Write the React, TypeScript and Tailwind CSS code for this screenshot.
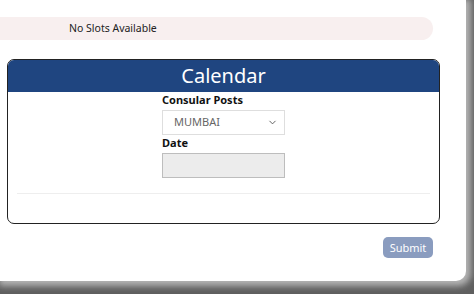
import { ChevronDown } from "lucide-react";

export default function App() {
  return (
    <div className="w-[474px] h-[294px] bg-[#5f5f5f] overflow-hidden" style={{ fontFamily: '"Noto Sans", "Open Sans", sans-serif' }}>
      <div className="w-[466px] h-[281px] bg-white rounded-br-[10px] shadow-[2px_2px_6px_3px_rgba(190,190,190,0.9)] pt-[17px]">
        {/* alert */}
        <div className="w-[433px] h-[23px] bg-[#f8efef] rounded-r-full flex items-center pl-[69px] text-[10.5px] text-[#222]">
          No Slots Available
        </div>

        {/* calendar panel */}
        <div className="mt-[19px] ml-[7px] w-[433px] h-[165px] border border-[#222] rounded-[7px] overflow-hidden">
          <div className="h-[32px] bg-[#1f4580] flex items-center justify-center text-white text-[20px] leading-none pb-[1px]">
            Calendar
          </div>
          <div className="flex flex-col items-start pl-[154px]">
            <div className="text-[11px] font-bold text-[#111] leading-[15px]">Consular Posts</div>
            <div className="mt-[3px] w-[123px] h-[25px] border border-[#dedede] flex items-center justify-between pl-[11px] pr-[6px] text-[11px] text-[#666]">
              <span>MUMBAI</span>
              <ChevronDown size={11} strokeWidth={2} className="text-[#555]" />
            </div>
            <div className="mt-0 text-[11px] font-bold text-[#111] leading-[15px]">Date</div>
            <div className="mt-[3px] w-[123px] h-[25px] border border-[#bdbdbd] bg-[#ececec]" />
          </div>
          <div className="mt-[15px] mx-[9px] border-t border-[#eeeeee]" />
        </div>

        {/* submit */}
        <div className="flex justify-end pr-[33px] mt-[13px]">
          <button className="w-[50px] h-[21px] rounded-[5px] bg-[#8a9cbf] text-white text-[11px] leading-none">
            Submit
          </button>
        </div>
      </div>
    </div>
  );
}
